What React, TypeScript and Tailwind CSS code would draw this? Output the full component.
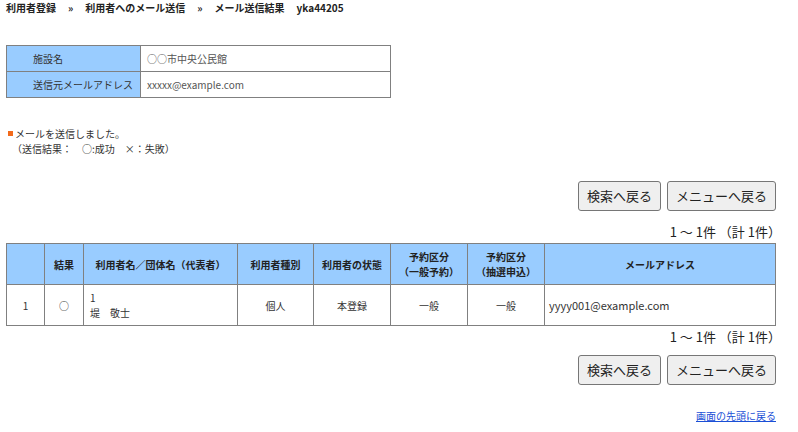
import React from 'react';

const FONT = { fontFamily: '"Noto Sans CJK JP", "Noto Sans", sans-serif' };

const columns = [
  { label: '', w: 'w-[38px]' },
  { label: '結果', w: 'w-[39px]' },
  { label: '利用者名／団体名（代表者）', w: 'w-[154px]' },
  { label: '利用者種別', w: 'w-[76px]' },
  { label: '利用者の状態', w: 'w-[77px]' },
  { label: '予約区分\n（一般予約）', w: 'w-[77px]' },
  { label: '予約区分\n（抽選申込）', w: 'w-[77px]' },
  { label: 'メールアドレス', w: '' },
];

const Buttons: React.FC = () => (
  <div className="flex justify-end gap-[6px]">
    <button className="h-[30px] px-[8px] bg-[#efefef] border border-[#767676] rounded-[3px] text-[13px] text-[#222]">検索へ戻る</button>
    <button className="h-[30px] px-[8px] bg-[#efefef] border border-[#767676] rounded-[3px] text-[13px] text-[#222]">メニューへ戻る</button>
  </div>
);

const Count: React.FC = () => (
  <div className="text-right text-[13px] text-[#222] leading-[18px] -mr-[5px]">1 ～ 1件 （計 1件）</div>
);

const App: React.FC = () => {
  return (
    <div className="w-[798px] h-[432px] bg-white text-[10px] text-[#333] overflow-hidden" style={FONT}>
      <div className="pl-[6px] pt-[1px] font-bold text-[#222] leading-[14px]">
        利用者登録<span className="px-[12px]">»</span>利用者へのメール送信<span className="px-[12px]">»</span>メール送信結果<span className="pl-[12px]">yka44205</span>
      </div>

      {/* facility info */}
      <table className="ml-[6px] mt-[30px] w-[385px] border-collapse">
        <tbody>
          <tr className="h-[26px]">
            <td className="w-[134px] bg-[#99ccff] border border-[#808080] pl-[26px] whitespace-nowrap">施設名</td>
            <td className="border border-[#808080] pl-[6px] text-[#555]">○○市中央公民館</td>
          </tr>
          <tr className="h-[26px]">
            <td className="bg-[#99ccff] border border-[#808080] pl-[26px] whitespace-nowrap">送信元メールアドレス</td>
            <td className="border border-[#808080] pl-[6px] text-[#555]">xxxxx@example.com</td>
          </tr>
        </tbody>
      </table>

      <div className="mt-[28px] pl-[8px] leading-[15px]">
        <div className="flex items-center">
          <span className="inline-block w-[5px] h-[5px] bg-[#f26a1b] mr-[2px]" />
          メールを送信しました。
        </div>
        <div className="pl-[4px]">（送信結果：　○:成功　×：失敗）</div>
      </div>

      <div className="w-[776px] mt-[25px]">
        <Buttons />
        <div className="mt-[12px]"><Count /></div>

        <table className="ml-[6px] mt-[2px] w-[770px] border-collapse">
          <thead>
            <tr className="h-[41px] bg-[#99ccff]">
              {columns.map((c, i) => (
                <th key={i} className={`${c.w} border border-[#808080] font-bold text-[#222] leading-[15px] whitespace-pre-line`}>
                  {c.label}
                </th>
              ))}
            </tr>
          </thead>
          <tbody>
            <tr className="h-[41px]">
              <td className="border border-[#808080] text-center">1</td>
              <td className="border border-[#808080] text-center">○</td>
              <td className="border border-[#808080] pl-[6px] leading-[15px]">1<br />堤　敬士</td>
              <td className="border border-[#808080] text-center">個人</td>
              <td className="border border-[#808080] text-center">本登録</td>
              <td className="border border-[#808080] text-center">一般</td>
              <td className="border border-[#808080] text-center">一般</td>
              <td className="border border-[#808080] pl-[4px] text-[11px]">yyyy001@example.com</td>
            </tr>
          </tbody>
        </table>

        <div className="mt-[2px]"><Count /></div>
        <div className="mt-[9px]"><Buttons /></div>

        <div className="mt-[23px] text-right">
          <a href="#" className="text-[#1a4fd6] underline">画面の先頭に戻る</a>
        </div>
      </div>
    </div>
  );
};

export default App;
